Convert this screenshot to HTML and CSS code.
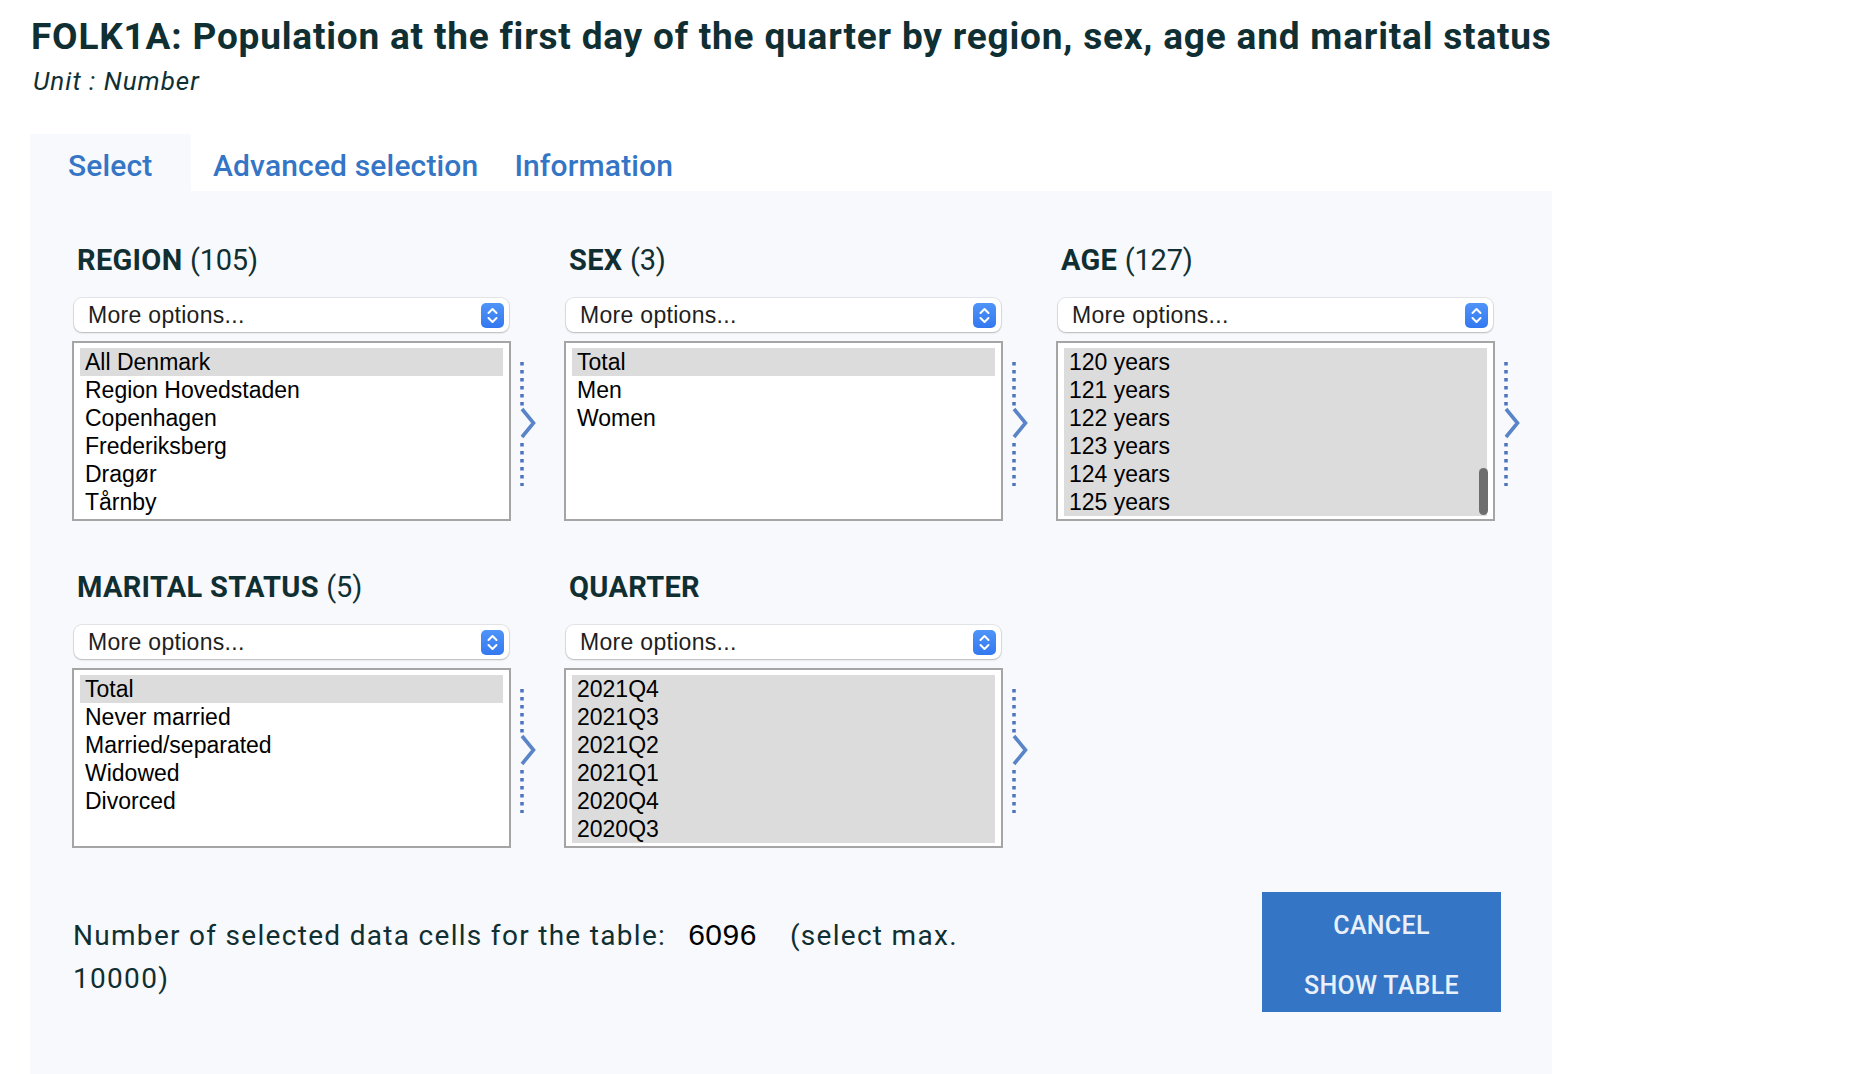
FILE: index.html
```html
<!DOCTYPE html>
<html lang="en">
<head>
<meta charset="utf-8">
<title>FOLK1A</title>
<link rel="stylesheet" href="styles.css">
</head>
<body>
<header class="head">
  <h1 class="title">FOLK1A: Population at the first day of the quarter by region, sex, age and marital status</h1>
  <p class="unit">Unit : Number</p>
</header>

<nav class="tabs">
  <a class="tab tab-active">Select</a>
  <a class="tab">Advanced selection</a>
  <a class="tab">Information</a>
</nav>

<section class="panel">
  <div class="grid">
    <div class="var">
      <h2 class="var-title">REGION <span class="count">(105)</span></h2>
      <div class="select"><span class="select-text">More options...</span><span class="select-btn"><svg viewBox="0 0 23 25" width="23" height="25"><path d="M7.5 10 L11.5 6 L15.5 10 M7.5 15 L11.5 19 L15.5 15" fill="none" stroke="#fff" stroke-width="2" stroke-linecap="round" stroke-linejoin="round"/></svg></span></div>
      <div class="row">
        <ul class="list">
          <li class="sel">All Denmark</li>
          <li>Region Hovedstaden</li>
          <li>Copenhagen</li>
          <li>Frederiksberg</li>
          <li>Dragør</li>
          <li>Tårnby</li>
        </ul>
        <svg class="arrow" viewBox="0 0 18 124" width="18" height="124"><path d="M3 0 V44 M3 81 V124" stroke="#4c74bd" stroke-width="3.5" stroke-dasharray="3.5 4.5" fill="none"/><path d="M3 47 L14.5 61 L3 75" stroke="#5a84c8" stroke-width="3.6" fill="none"/></svg>
      </div>
    </div>

    <div class="var">
      <h2 class="var-title">SEX <span class="count">(3)</span></h2>
      <div class="select"><span class="select-text">More options...</span><span class="select-btn"><svg viewBox="0 0 23 25" width="23" height="25"><path d="M7.5 10 L11.5 6 L15.5 10 M7.5 15 L11.5 19 L15.5 15" fill="none" stroke="#fff" stroke-width="2" stroke-linecap="round" stroke-linejoin="round"/></svg></span></div>
      <div class="row">
        <ul class="list">
          <li class="sel">Total</li>
          <li>Men</li>
          <li>Women</li>
        </ul>
        <svg class="arrow" viewBox="0 0 18 124" width="18" height="124"><path d="M3 0 V44 M3 81 V124" stroke="#4c74bd" stroke-width="3.5" stroke-dasharray="3.5 4.5" fill="none"/><path d="M3 47 L14.5 61 L3 75" stroke="#5a84c8" stroke-width="3.6" fill="none"/></svg>
      </div>
    </div>

    <div class="var">
      <h2 class="var-title">AGE <span class="count">(127)</span></h2>
      <div class="select"><span class="select-text">More options...</span><span class="select-btn"><svg viewBox="0 0 23 25" width="23" height="25"><path d="M7.5 10 L11.5 6 L15.5 10 M7.5 15 L11.5 19 L15.5 15" fill="none" stroke="#fff" stroke-width="2" stroke-linecap="round" stroke-linejoin="round"/></svg></span></div>
      <div class="row">
        <ul class="list list-all">
          <li class="sel">120 years</li>
          <li class="sel">121 years</li>
          <li class="sel">122 years</li>
          <li class="sel">123 years</li>
          <li class="sel">124 years</li>
          <li class="sel">125 years</li>
          <span class="thumb"></span>
        </ul>
        <svg class="arrow" viewBox="0 0 18 124" width="18" height="124"><path d="M3 0 V44 M3 81 V124" stroke="#4c74bd" stroke-width="3.5" stroke-dasharray="3.5 4.5" fill="none"/><path d="M3 47 L14.5 61 L3 75" stroke="#5a84c8" stroke-width="3.6" fill="none"/></svg>
      </div>
    </div>

    <div class="var">
      <h2 class="var-title">MARITAL STATUS <span class="count">(5)</span></h2>
      <div class="select"><span class="select-text">More options...</span><span class="select-btn"><svg viewBox="0 0 23 25" width="23" height="25"><path d="M7.5 10 L11.5 6 L15.5 10 M7.5 15 L11.5 19 L15.5 15" fill="none" stroke="#fff" stroke-width="2" stroke-linecap="round" stroke-linejoin="round"/></svg></span></div>
      <div class="row">
        <ul class="list">
          <li class="sel">Total</li>
          <li>Never married</li>
          <li>Married/separated</li>
          <li>Widowed</li>
          <li>Divorced</li>
        </ul>
        <svg class="arrow" viewBox="0 0 18 124" width="18" height="124"><path d="M3 0 V44 M3 81 V124" stroke="#4c74bd" stroke-width="3.5" stroke-dasharray="3.5 4.5" fill="none"/><path d="M3 47 L14.5 61 L3 75" stroke="#5a84c8" stroke-width="3.6" fill="none"/></svg>
      </div>
    </div>

    <div class="var">
      <h2 class="var-title">QUARTER</h2>
      <div class="select"><span class="select-text">More options...</span><span class="select-btn"><svg viewBox="0 0 23 25" width="23" height="25"><path d="M7.5 10 L11.5 6 L15.5 10 M7.5 15 L11.5 19 L15.5 15" fill="none" stroke="#fff" stroke-width="2" stroke-linecap="round" stroke-linejoin="round"/></svg></span></div>
      <div class="row">
        <ul class="list list-all">
          <li class="sel">2021Q4</li>
          <li class="sel">2021Q3</li>
          <li class="sel">2021Q2</li>
          <li class="sel">2021Q1</li>
          <li class="sel">2020Q4</li>
          <li class="sel">2020Q3</li>
        </ul>
        <svg class="arrow" viewBox="0 0 18 124" width="18" height="124"><path d="M3 0 V44 M3 81 V124" stroke="#4c74bd" stroke-width="3.5" stroke-dasharray="3.5 4.5" fill="none"/><path d="M3 47 L14.5 61 L3 75" stroke="#5a84c8" stroke-width="3.6" fill="none"/></svg>
      </div>
    </div>
  </div>

  <div class="footer">
    <div class="cells">
      <span class="cells-label">Number of selected data cells for the table:</span>
      <span class="num">6096</span>
      <span class="max">(select max.</span>
      <span class="max">10000)</span>
    </div>
    <div class="actions">
      <button class="btn">CANCEL</button>
      <button class="btn">SHOW TABLE</button>
    </div>
  </div>
</section>
</body>
</html>
```

FILE: styles.css
```css
* { box-sizing: border-box; }

body {
  margin: 0;
  background: #ffffff;
  font-family: Roboto, "Liberation Sans", sans-serif;
  color: #102f33;
}

.head {
  padding: 14px 0 0 31px;
}

.title {
  margin: 0;
  font-size: 37px;
  line-height: 46px;
  font-weight: 700;
  letter-spacing: 0.8px;
  color: #102f33;
  white-space: nowrap;
}

.unit {
  margin: 6px 0 0 2px;
  font-size: 26px;
  line-height: 30px;
  font-style: italic;
  letter-spacing: 1px;
  color: #102f33;
}

.tabs {
  display: flex;
  margin: 38px 0 0 30px;
  height: 57px;
}

.tab {
  display: block;
  height: 57px;
  padding: 6px 14px 0 22px;
  line-height: 51px;
  font-size: 30px;
  font-weight: 500;
  letter-spacing: 0.15px;
  color: #3575c5;
  text-decoration: none;
}

.tab-active {
  background: #f7f9fc;
  padding: 6px 0 0 38px;
  width: 161px;
}

.panel {
  margin-left: 30px;
  width: 1522px;
  min-height: 890px;
  background: #f7f9fc;
  padding: 51px 0 70px 42px;
}

.grid {
  display: grid;
  grid-template-columns: repeat(3, 492px);
  row-gap: 48px;
}

.var-title {
  margin: 0 0 0 5px;
  font-size: 29px;
  line-height: 36px;
  font-weight: 700;
  letter-spacing: 0.3px;
  color: #102f33;
}

.count {
  font-weight: 400;
  letter-spacing: -0.2px;
}

.select {
  display: flex;
  align-items: center;
  justify-content: space-between;
  width: 435px;
  height: 34px;
  margin: 20px 0 0 2px;
  padding: 0 5px 0 14px;
  background: #ffffff;
  border-radius: 8px;
  box-shadow: 0 0 0 1px rgba(0, 0, 0, 0.08), 0 1px 2px rgba(0, 0, 0, 0.2);
}

.select-text {
  font-family: "Liberation Sans", Arial, sans-serif;
  font-size: 23px;
  letter-spacing: 0.3px;
  color: #1e1e1e;
}

.select-btn {
  display: flex;
  width: 23px;
  height: 25px;
  border-radius: 5px;
  background: linear-gradient(#4f94f8, #3478f0);
}

.row {
  display: flex;
  align-items: flex-start;
  margin-top: 9px;
}

.list {
  position: relative;
  width: 439px;
  height: 180px;
  margin: 0;
  padding: 5px 6px 3px;
  list-style: none;
  background: #ffffff;
  border: 2px solid #a5a5a5;
  overflow: hidden;
  font-family: "Liberation Sans", Arial, sans-serif;
  font-size: 23px;
  color: #000000;
}

.list li {
  height: 28px;
  line-height: 28px;
  padding-left: 5px;
  white-space: nowrap;
}

.list .sel {
  background: #dcdcdc;
}

.thumb {
  position: absolute;
  right: 5px;
  bottom: 4px;
  width: 9px;
  height: 47px;
  border-radius: 5px;
  background: #6e6e6e;
}

.arrow {
  display: block;
  margin: 21px 0 0 8px;
}

.footer {
  display: flex;
  justify-content: space-between;
  align-items: flex-start;
  margin-top: 44px;
}

.cells {
  display: flex;
  flex-wrap: wrap;
  align-items: baseline;
  width: 960px;
  margin: 21px 0 0 1px;
  font-size: 28px;
  line-height: 43px;
  letter-spacing: 1.3px;
  color: #102f33;
}

.num {
  margin: 0 33px 0 22px;
  font-family: "Liberation Sans", Arial, sans-serif;
  font-size: 30px;
  letter-spacing: 0.5px;
  color: #000000;
}

.actions {
  display: flex;
  flex-direction: column;
  margin-right: 51px;
}

.btn {
  display: block;
  width: 239px;
  height: 60px;
  padding: 6px 0 0;
  border: 0;
  background: #3575c5;
  color: #eaf0fa;
  font-family: Roboto, sans-serif;
  font-size: 25px;
  font-weight: 500;
  letter-spacing: 0.3px;
}
```
